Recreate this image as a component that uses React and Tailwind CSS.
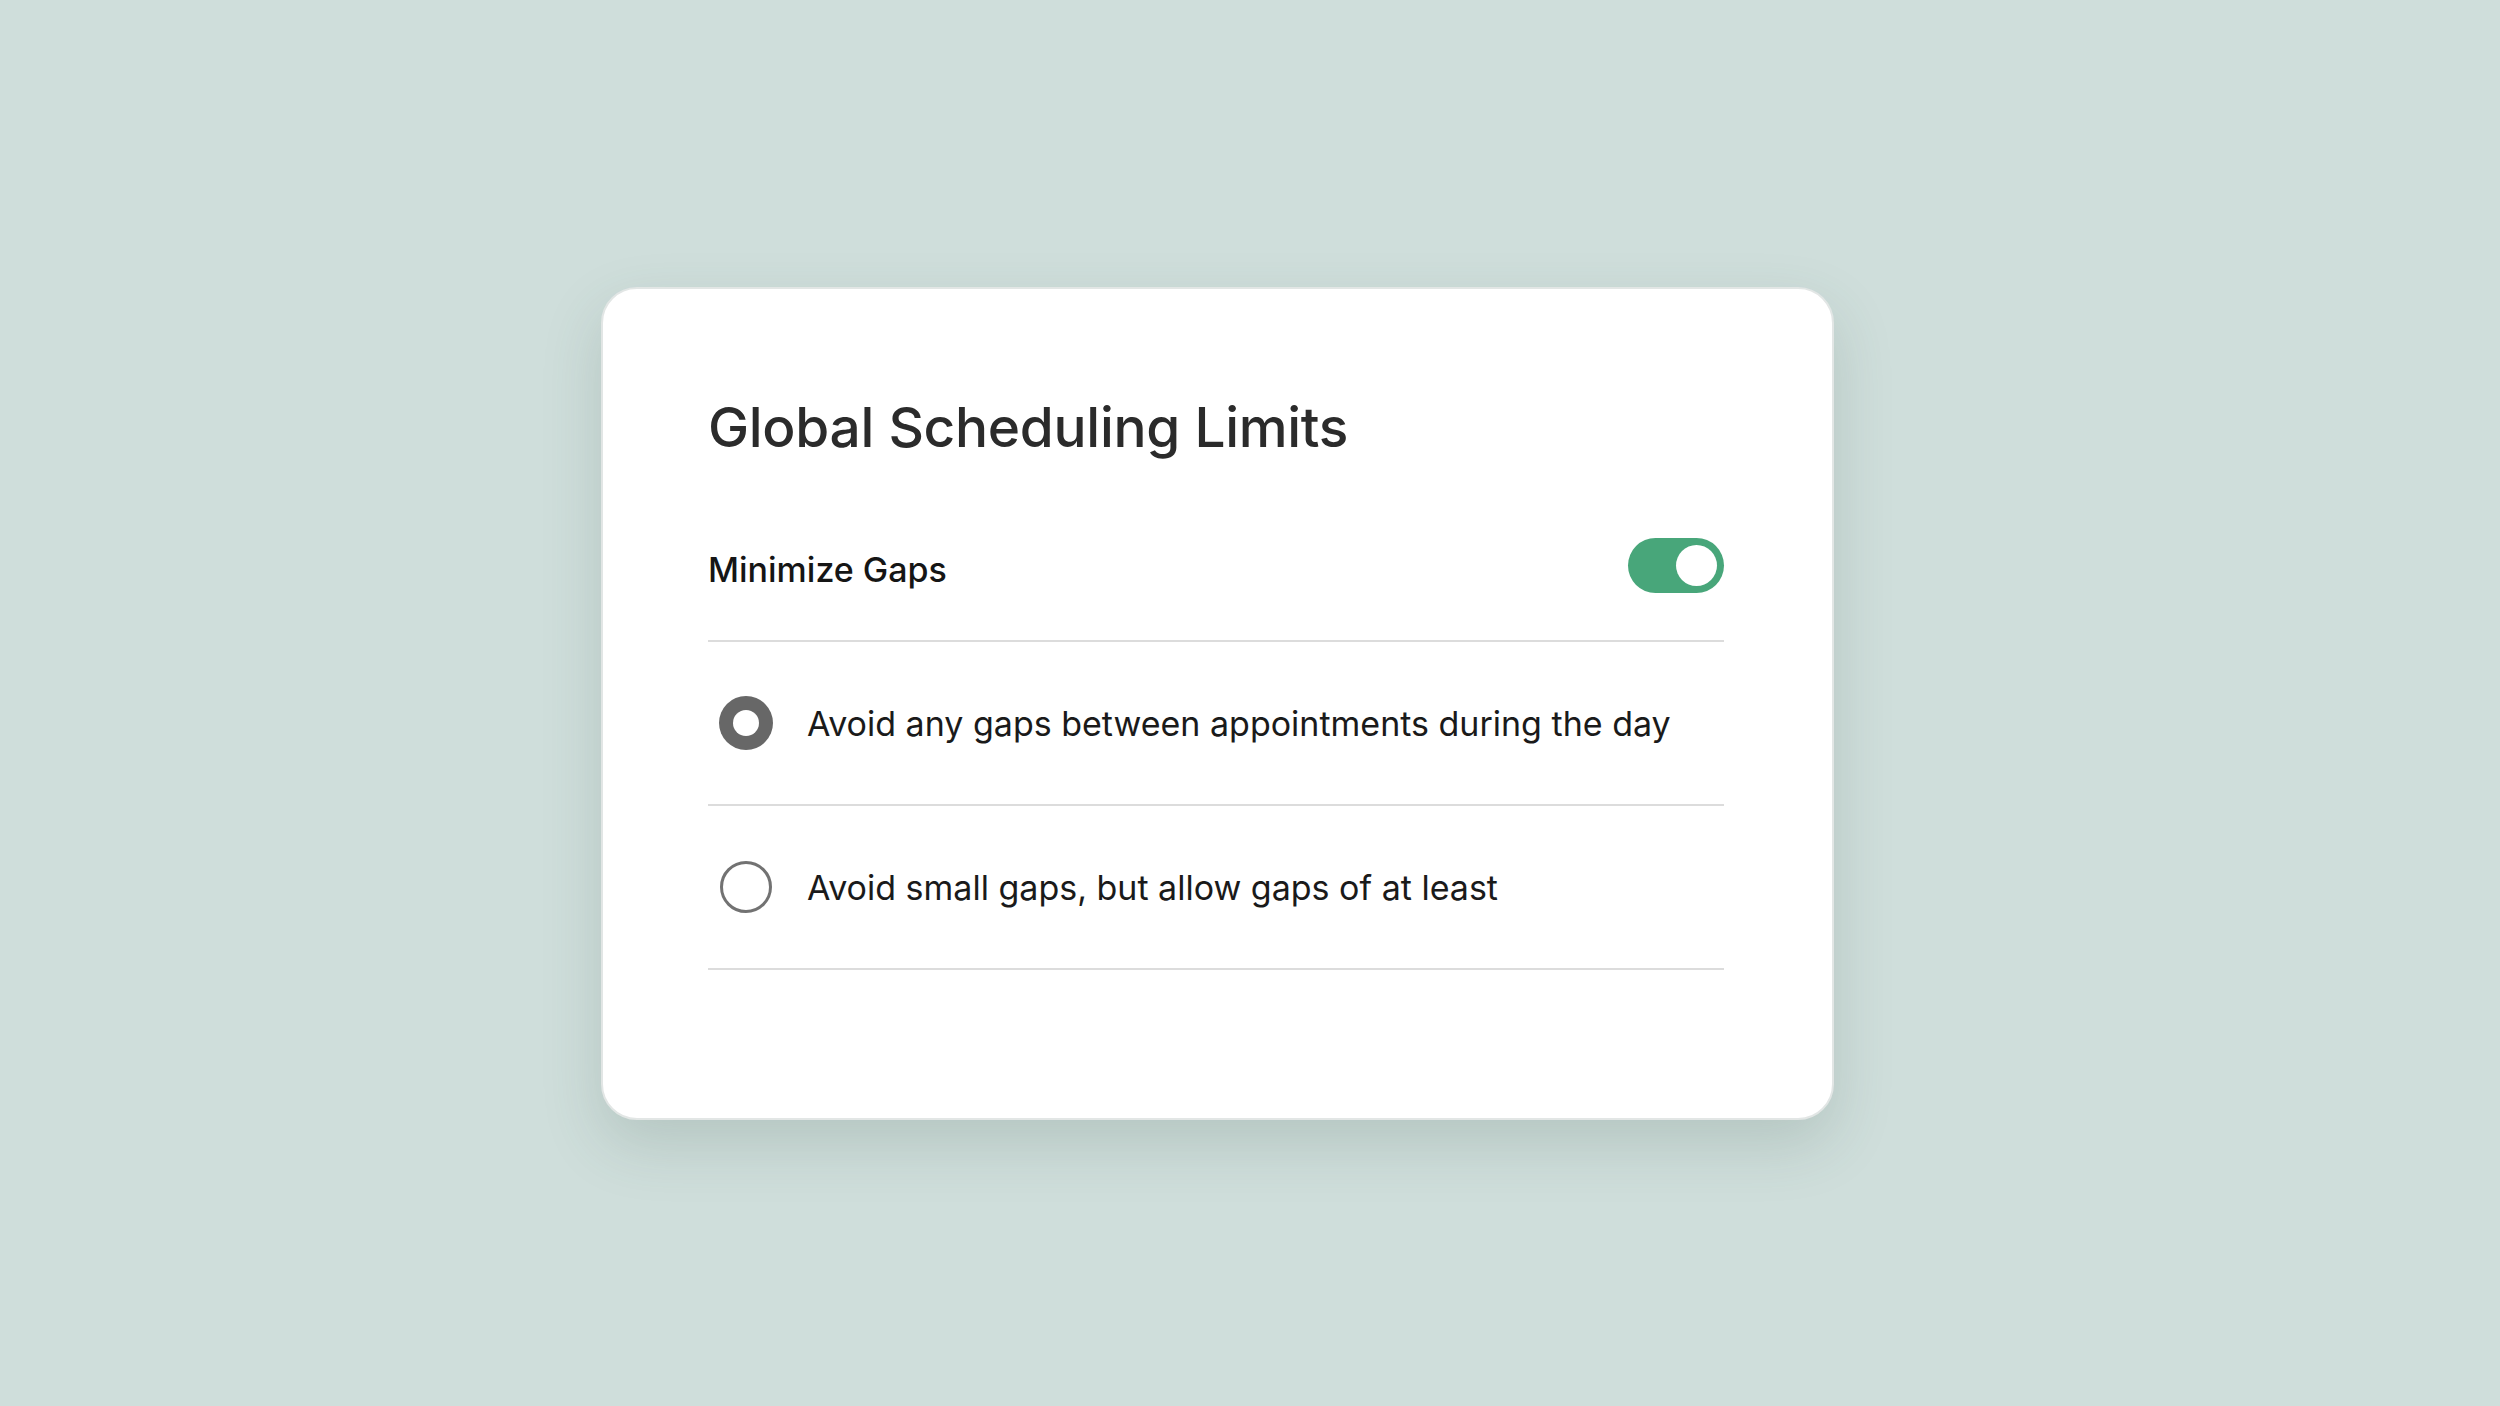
import React, { useState } from 'react'

const OPTIONS = [
  'Avoid any gaps between appointments during the day',
  'Avoid small gaps, but allow gaps of at least',
]

function Toggle({ on, onChange }) {
  return (
    <button
      onClick={() => onChange(!on)}
      className={`flex items-center w-[96px] h-[55px] rounded-full px-[7px] ${on ? 'bg-[#48a67a] justify-end' : 'bg-[#c9c9c9] justify-start'}`}
    >
      <span className="block w-[41px] h-[41px] rounded-full bg-white" />
    </button>
  )
}

function Radio({ checked }) {
  return checked ? (
    <span className="flex items-center justify-center w-[54px] h-[54px] rounded-full bg-[#676767] shrink-0">
      <span className="block w-[26px] h-[26px] rounded-full bg-white" />
    </span>
  ) : (
    <span className="block w-[52px] h-[52px] mx-[1px] rounded-full border-[3px] border-[#727272] shrink-0" />
  )
}

export default function App() {
  const [minimize, setMinimize] = useState(true)
  const [choice, setChoice] = useState(0)

  return (
    <div className="w-full h-[1406px] bg-[#cfdedb] flex items-center justify-center" style={{ fontFamily: 'Inter, "Noto Sans", sans-serif' }}>
      <div className="w-[1233px] h-[833px] mr-[65px] bg-white rounded-[36px] border-2 border-[#e2e6e5] shadow-[0_24px_60px_rgba(60,90,80,0.18)] pl-[105px] pr-[108px] pt-[111px]">
        <h1 className="text-[55px] leading-[55px] h-[55px] font-medium text-[#2b2b2b] tracking-[-0.3px]">
          Global Scheduling Limits
        </h1>

        <div className="mt-[37px] h-[150px] flex items-center justify-between border-b-2 border-[#dcdcdc]">
          <span className="text-[34px] leading-[40px] pt-[8px] font-medium text-[#151515]">Minimize Gaps</span>
          <Toggle on={minimize} onChange={setMinimize} />
        </div>

        {OPTIONS.map((label, i) => (
          <label
            key={label}
            onClick={() => setChoice(i)}
            className="h-[164px] flex items-center gap-[34px] pl-[11px] border-b-2 border-[#dcdcdc] cursor-pointer"
          >
            <Radio checked={choice === i} />
            <span className="text-[34px] leading-[40px] pt-[2px] text-[#1a1a1a]">{label}</span>
          </label>
        ))}
      </div>
    </div>
  )
}
